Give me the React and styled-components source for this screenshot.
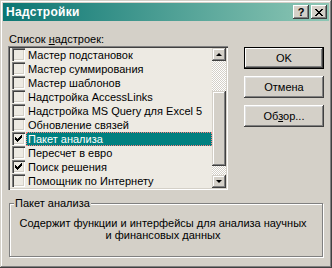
import styled, { createGlobalStyle } from 'styled-components';

const GlobalStyle = createGlobalStyle`
  html, body {
    margin: 0;
    padding: 0;
    background: #d4d0c8;
  }
  body {
    font-family: "Liberation Sans", Arial, sans-serif;
    font-size: 11px;
    color: #000;
  }
`;

const raised = `
  box-shadow: inset -1px -1px #404040, inset 1px 1px #d4d0c8,
    inset -2px -2px #808080, inset 2px 2px #fff;
`;

const Window = styled.div`
  width: 332px;
  height: 268px;
  box-sizing: border-box;
  padding: 3px;
  background: #d4d0c8;
  display: flex;
  flex-direction: column;
  ${raised}
`;

const TitleBar = styled.div`
  height: 18px;
  display: flex;
  align-items: center;
  padding: 0 2px 0 3px;
  background: linear-gradient(to right, #0b7673, #8ec7b5);
  color: #fff;
  font-weight: bold;
  font-size: 12px;
`;

const TitleText = styled.div`
  flex: 1;
  letter-spacing: 0.3px;
`;

const TitleButtons = styled.div`
  display: flex;
  gap: 2px;
`;

const TitleButton = styled.div`
  width: 16px;
  height: 14px;
  background: #d4d0c8;
  color: #000;
  display: flex;
  align-items: center;
  justify-content: center;
  font-size: 11px;
  font-weight: bold;
  line-height: 14px;
  box-shadow: inset -1px -1px #404040, inset 1px 1px #fff,
    inset -2px -2px #808080, inset 2px 2px #d4d0c8;
`;

const Body = styled.div`
  flex: 1;
  display: flex;
  flex-direction: column;
  padding: 12px 5px 0 5px;
`;

const Top = styled.div`
  display: flex;
  gap: 16px;
`;

const LeftCol = styled.div`
  width: 220px;
`;

const Label = styled.div`
  height: 13px;
  line-height: 13px;
  padding-left: 1px;
`;

const U = styled.span`
  text-decoration: underline;
`;

const ListBox = styled.div`
  height: 144px;
  box-sizing: border-box;
  padding: 2px;
  display: flex;
  background: #edeae3;
  box-shadow: inset 1px 1px #808080, inset 2px 2px #404040,
    inset -1px -1px #fff, inset -2px -2px #d4d0c8;
`;

const Rows = styled.div`
  flex: 1;
  display: flex;
  flex-direction: column;
`;

const Row = styled.div`
  height: 14px;
  display: flex;
  align-items: flex-start;
`;

const CheckBox = styled.div`
  width: 13px;
  height: 13px;
  box-sizing: border-box;
  margin: 0 1px 0 2px;
  background: #edeae3;
  box-shadow: inset 1px 1px #808080, inset 2px 2px #404040,
    inset -1px -1px #fff, inset -2px -2px #d4d0c8;
  display: flex;
  align-items: center;
  justify-content: center;
`;

const RowText = styled.div`
  flex: 1;
  height: 14px;
  box-sizing: border-box;
  line-height: 12px;
  padding: 0 1px;
  white-space: nowrap;
  border: 1px ${(p) => (p.$selected ? 'dotted #ff7f7f' : 'solid transparent')};
  background: ${(p) => (p.$selected ? '#008080' : 'transparent')};
  color: ${(p) => (p.$selected ? '#fff' : '#000')};
`;

const ScrollBar = styled.div`
  width: 14px;
  display: flex;
  flex-direction: column;
`;

const ScrollButton = styled.div`
  height: 13px;
  background: #d4d0c8;
  display: flex;
  align-items: center;
  justify-content: center;
  box-shadow: inset -1px -1px #404040, inset 1px 1px #d4d0c8,
    inset -2px -2px #808080, inset 2px 2px #fff;
`;

const Arrow = styled.div`
  width: 0;
  height: 0;
  border-left: 3px solid transparent;
  border-right: 3px solid transparent;
  ${(p) => (p.$down ? 'border-top: 3px solid #000;' : 'border-bottom: 3px solid #000;')}
`;

const Track = styled.div`
  height: ${(p) => p.$h}px;
  background-image: conic-gradient(#d4d0c8 25%, #fff 0 50%, #d4d0c8 0 75%, #fff 0);
  background-size: 2px 2px;
`;

const Thumb = styled.div`
  height: 75px;
  background: #d4d0c8;
  box-shadow: inset -1px -1px #404040, inset 1px 1px #d4d0c8,
    inset -2px -2px #808080, inset 2px 2px #fff;
`;

const RightCol = styled.div`
  width: 80px;
  padding-top: 14px;
  display: flex;
  flex-direction: column;
  gap: 7px;
`;

const Button = styled.div`
  height: 22px;
  display: flex;
  align-items: center;
  justify-content: center;
  background: #d4d0c8;
  box-shadow: ${(p) =>
    p.$default
      ? 'inset 0 0 0 1px #000, inset -2px -2px #404040, inset 2px 2px #fff, inset -3px -3px #808080'
      : 'inset -1px -1px #404040, inset 1px 1px #fff, inset -2px -2px #808080, inset 2px 2px #dfdfdf'};
`;

const Group = styled.div`
  position: relative;
  margin: 13px 1px 0 1px;
  height: 54px;
  box-sizing: border-box;
  border: 1px solid #808080;
  box-shadow: inset 1px 1px #fff, 1px 1px #fff;
  padding: 13px 6px 0 0;
  text-align: center;
  line-height: 12px;
`;

const Legend = styled.div`
  position: absolute;
  top: -7px;
  left: 4px;
  padding: 0 1px;
  line-height: 13px;
  background: #d4d0c8;
`;

const Check = () => (
  <svg width="7" height="7" viewBox="0 0 7 7" shapeRendering="crispEdges">
    {[2, 3, 4, 3, 2, 1, 0].map((y, x) => (
      <rect key={x} x={x} y={y} width="1" height="3" fill="#000" />
    ))}
  </svg>
);

const CloseGlyph = () => (
  <svg width="8" height="7" viewBox="0 0 8 7" shapeRendering="crispEdges">
    {[0, 1, 2, 3, 4, 5, 6].map((i) => (
      <g key={i}>
        <rect x={i} y={i} width="2" height="1" fill="#000" />
        <rect x={6 - i} y={i} width="2" height="1" fill="#000" />
      </g>
    ))}
  </svg>
);

const items = [
  { name: 'Мастер подстановок' },
  { name: 'Мастер суммирования' },
  { name: 'Мастер шаблонов' },
  { name: 'Надстройка AccessLinks' },
  { name: 'Надстройка MS Query для Excel 5' },
  { name: 'Обновление связей' },
  { name: 'Пакет анализа', checked: true, selected: true },
  { name: 'Пересчет в евро' },
  { name: 'Поиск решения', checked: true },
  { name: 'Помощник по Интернету' },
];

export default function App() {
  return (
    <>
      <GlobalStyle />
      <Window>
        <TitleBar>
          <TitleText>Надстройки</TitleText>
          <TitleButtons>
            <TitleButton>?</TitleButton>
            <TitleButton>
              <CloseGlyph />
            </TitleButton>
          </TitleButtons>
        </TitleBar>
        <Body>
          <Top>
            <LeftCol>
              <Label>
                Список <U>н</U>адстроек:
              </Label>
              <ListBox>
                <Rows>
                  {items.map((it) => (
                    <Row key={it.name}>
                      <CheckBox>{it.checked && <Check />}</CheckBox>
                      <RowText $selected={it.selected}>{it.name}</RowText>
                    </Row>
                  ))}
                </Rows>
                <ScrollBar>
                  <ScrollButton>
                    <Arrow />
                  </ScrollButton>
                  <Track $h={30} />
                  <Thumb />
                  <Track $h={9} />
                  <ScrollButton>
                    <Arrow $down />
                  </ScrollButton>
                </ScrollBar>
              </ListBox>
            </LeftCol>
            <RightCol>
              <Button $default>OK</Button>
              <Button>Отмена</Button>
              <Button>
                <span>
                  Об<U>з</U>ор...
                </span>
              </Button>
            </RightCol>
          </Top>
          <Group>
            <Legend>Пакет анализа</Legend>
            Содержит функции и интерфейсы для анализа научных
            <br />
            и финансовых данных
          </Group>
        </Body>
      </Window>
    </>
  );
}
